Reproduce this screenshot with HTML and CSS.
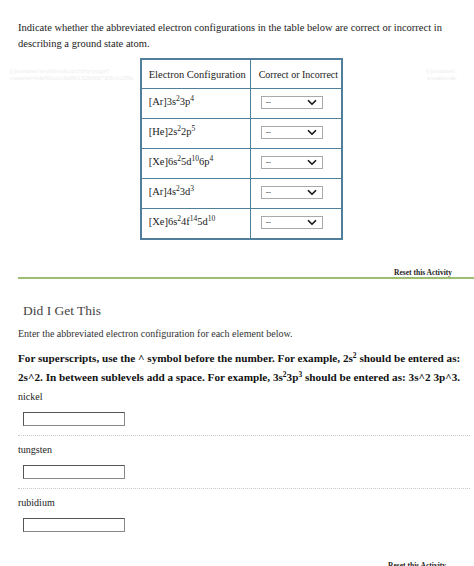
FILE: index.html
```html
<!DOCTYPE html>
<html>
<head>
<meta charset="utf-8">
<link rel="stylesheet" href="styles.css">
</head>
<body>
<div class="page">
  <p class="intro">Indicate whether the abbreviated electron configurations in the table below are correct or incorrect in describing a ground state atom.</p>
  <div class="table-wrap">
    <div class="ghost ghost-left">(/jsonuser/workbook/activity/page?<br>context=bdef01a1c0a80132006f7d3b1a2f9c4e</div>
    <table class="config">
      <thead>
        <tr><th class="c1">Electron Configuration</th><th class="c2">Correct or Incorrect</th></tr>
      </thead>
      <tbody>
        <tr><td>[Ar]3s<sup>2</sup>3p<sup>4</sup></td><td><div class="sel"><span>--</span><svg width="10" height="7" viewBox="0 0 10 7"><path d="M1 1.2 L5 5.2 L9 1.2" fill="none" stroke="#111" stroke-width="1.6"/></svg></div></td></tr>
        <tr><td>[He]2s<sup>2</sup>2p<sup>5</sup></td><td><div class="sel"><span>--</span><svg width="10" height="7" viewBox="0 0 10 7"><path d="M1 1.2 L5 5.2 L9 1.2" fill="none" stroke="#111" stroke-width="1.6"/></svg></div></td></tr>
        <tr><td>[Xe]6s<sup>2</sup>5d<sup>10</sup>6p<sup>4</sup></td><td><div class="sel"><span>--</span><svg width="10" height="7" viewBox="0 0 10 7"><path d="M1 1.2 L5 5.2 L9 1.2" fill="none" stroke="#111" stroke-width="1.6"/></svg></div></td></tr>
        <tr><td>[Ar]4s<sup>2</sup>3d<sup>3</sup></td><td><div class="sel"><span>--</span><svg width="10" height="7" viewBox="0 0 10 7"><path d="M1 1.2 L5 5.2 L9 1.2" fill="none" stroke="#111" stroke-width="1.6"/></svg></div></td></tr>
        <tr><td>[Xe]6s<sup>2</sup>4f<sup>14</sup>5d<sup>10</sup></td><td><div class="sel"><span>--</span><svg width="10" height="7" viewBox="0 0 10 7"><path d="M1 1.2 L5 5.2 L9 1.2" fill="none" stroke="#111" stroke-width="1.6"/></svg></div></td></tr>
      </tbody>
    </table>
    <div class="ghost ghost-right">(/jsonuser/<br>workbook/</div>
  </div>
  <div class="reset-bar"><span class="reset">Reset this Activity</span></div>
  <h2 class="dig">Did I Get This</h2>
  <p class="instr">Enter the abbreviated electron configuration for each element below.</p>
  <p class="bold">For superscripts, use the ^ symbol before the number. For example, 2s<sup>2</sup> should be entered as: 2s^2. In between sublevels add a space. For example, 3s<sup>2</sup>3p<sup>3</sup> should be entered as: 3s^2 3p^3.</p>
  <div class="item">
    <div class="label">nickel</div>
    <div class="inp"></div>
  </div>
  <div class="item">
    <div class="label">tungsten</div>
    <div class="inp"></div>
  </div>
  <div class="item last">
    <div class="label">rubidium</div>
    <div class="inp"></div>
  </div>
  <div class="bottom-reset"><span class="reset">Reset this Activity</span></div>
</div>
</body>
</html>
```
FILE: styles.css
```css
html, body {
  margin: 0;
  padding: 0;
  background: #fff;
}
.page {
  padding: 20px 4px 0 18px;
  font-family: "Liberation Serif", "Times New Roman", serif;
  color: #222;
  font-size: 10.5px;
  height: 566px;
  box-sizing: border-box;
  overflow: hidden;
}
.intro {
  margin: 0;
  line-height: 16px;
  width: 445px;
}
.table-wrap {
  display: flex;
  align-items: flex-start;
  margin-left: -8px;
  margin-top: 6px;
}
.ghost {
  color: #ececec;
  font-size: 7px;
  line-height: 7px;
  margin-top: 10px;
  overflow: hidden;
  white-space: nowrap;
}
.ghost-left {
  width: 125px;
}
.ghost-right {
  width: 44px;
  margin-left: 83px;
}
.config {
  margin-left: 6px;
  border-collapse: collapse;
  border: 2px solid #4f7f9a;
  width: 206px;
}
.config th, .config td {
  border: 1.5px solid #4f7f9a;
  height: 28px;
  padding: 0 0 0 7px;
  text-align: left;
  font-weight: normal;
  font-size: 10.5px;
  color: #222;
  vertical-align: middle;
  white-space: nowrap;
}
.config th.c1 { width: 101px; }
.config th.c2 { padding-left: 8px; font-size: 10px; }
.config td:nth-child(2) { padding-left: 10px; }
.config td { vertical-align: top; padding-top: 7px; height: 22px; }
.config sup {
  font-size: 7.5px;
  line-height: 0;
  vertical-align: 4px;
}
.sel {
  border: 1px solid #aaa;
  display: flex;
  align-items: center;
  justify-content: space-between;
  padding: 0 5px 0 4px;
  box-sizing: border-box;
  width: 62px;
  height: 13px;
  font-size: 8px;
  color: #444;
}
.sel span { line-height: 10px; }
.reset-bar {
  display: flex;
  justify-content: flex-end;
  border-bottom: 2px solid #9dbd72;
  margin-top: 26px;
  margin-right: -4px;
  padding-right: 22px;
  height: 11px;
  align-items: flex-end;
}
.reset {
  font-family: "Liberation Serif", serif;
  font-weight: bold;
  font-size: 7.5px;
  line-height: 8px;
  color: #222;
}
.dig {
  margin: 24px 0 0 5px;
  font-size: 13.5px;
  font-weight: normal;
  color: #444;
  font-family: "Liberation Serif", serif;
  line-height: 16px;
}
.instr {
  margin: 8px 0 0 0;
  font-size: 10px;
  line-height: 14px;
  color: #333;
}
.bold {
  margin: 8px 0 0 0;
  font-weight: bold;
  font-size: 11.2px;
  line-height: 19px;
  color: #111;
  width: 452px;
}
.bold sup {
  font-size: 7.5px;
  line-height: 0;
  vertical-align: 4px;
}
.item {
  border-bottom: 1px dotted #c8c8c8;
  padding-top: 3px;
  padding-bottom: 9px;
}
.item.last { border-bottom: none; }
.item + .item { padding-top: 7px; }
.label {
  font-size: 10px;
  line-height: 14px;
  color: #222;
}
.inp {
  margin: 8px 0 0 5px;
  width: 102px;
  height: 14px;
  box-sizing: border-box;
  border: 1.5px solid #555;
  border-right-color: #888;
  border-bottom-color: #888;
}
.bottom-reset {
  display: flex;
  justify-content: flex-end;
  padding-right: 24px;
  margin-top: 21px;
}
```
